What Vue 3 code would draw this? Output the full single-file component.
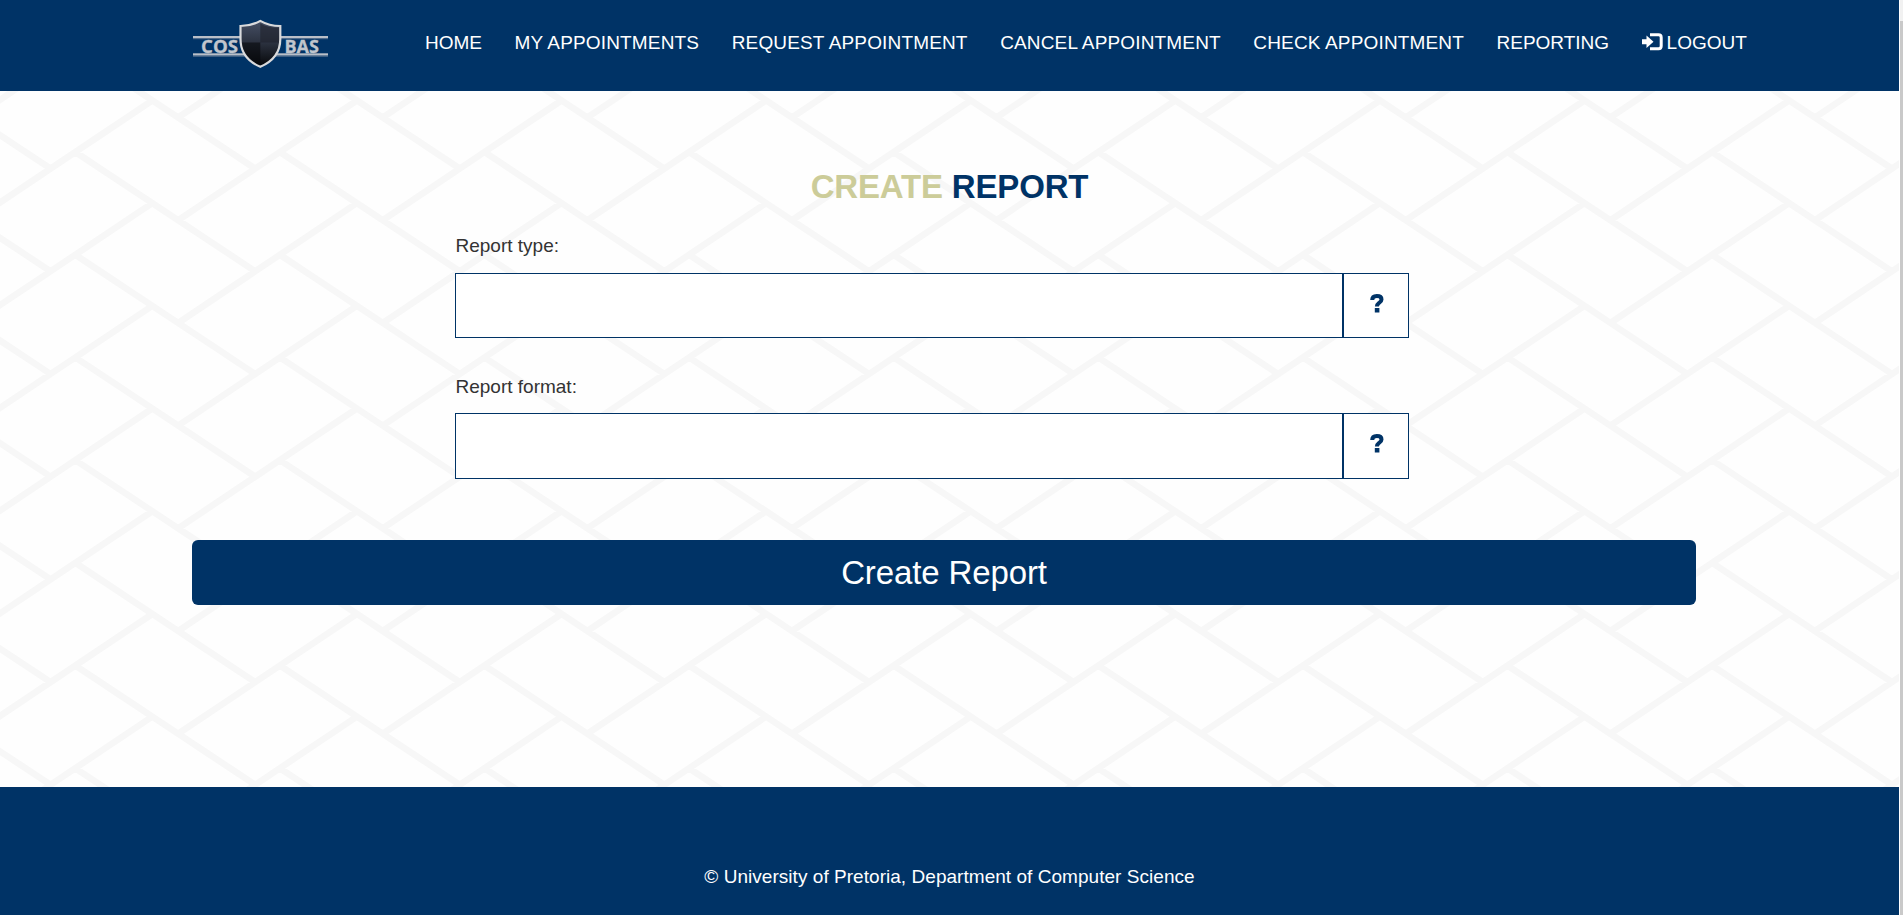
<script setup>
const links = ['HOME', 'MY APPOINTMENTS', 'REQUEST APPOINTMENT', 'CANCEL APPOINTMENT', 'CHECK APPOINTMENT', 'REPORTING']
const fields = ['Report type:', 'Report format:']

// Woven lattice: two slanted strokes repeated on a 204.6 x 102.7 grid
const stepX = 204.6
const stepY = 102.7
let lattice = ''
for (let i = -2; i < 10; i++) {
  for (let j = -3; j < 7; j++) {
    const x = i * stepX
    const y = j * stepY
    lattice += `M${x + 178.5} ${y + 129}L${x + 355} ${y + 10.7}M${x + 76} ${y + 61.5}L${x + 255} ${y + 180.2}`
  }
}
</script>

<template>
  <div class="page">
    <div class="site">
      <header class="navbar">
        <svg class="logo" width="136" height="50" viewBox="0 0 136 50">
          <defs>
            <linearGradient id="shade" x1="0" y1="0" x2="0" y2="1">
              <stop offset="0" stop-color="#465066" />
              <stop offset=".5" stop-color="#2a303d" />
              <stop offset="1" stop-color="#050608" />
            </linearGradient>
          </defs>
          <g fill="#b9bfc8">
            <rect x="0" y="17" width="135" height="2.200" />
            <rect x="0" y="34.300" width="135" height="2.200" />
          </g>
          <g fill="#7d8da3" opacity=".6">
            <rect x="0" y="19.200" width="135" height="1" />
            <rect x="0" y="36.500" width="135" height="1.300" />
          </g>
          <g class="logo-text">
            <text x="8" y="33.500" textLength="37" lengthAdjust="spacingAndGlyphs">COS</text>
            <text x="91.500" y="33.500" textLength="34.500" lengthAdjust="spacingAndGlyphs">BAS</text>
          </g>
          <path d="M67.3 1.9C61 5.5 54 7 47.500 7V20C47.500 35 56 43 67.3 47.8C78.500 43 87.300 35 87.300 20V7C80.500 7 73.500 5.500 67.300 1.900Z" fill="url(#shade)" stroke="#d9dadc" stroke-width="2.200" />
          <path d="M67.300 4.500C73 8 79.500 9 85.900 8.800V23.500H67.300Z" fill="#20242e" opacity=".65" />
          <path d="M49 23.500H67.300V46C57 40.500 50 34 49 23.500Z" fill="#07080b" opacity=".6" />
        </svg>
        <nav class="links">
          <a v-for="link in links" :key="link" :class="{ spaced: link.includes('APPOINTMENT') }">{{ link }}</a>
          <a class="logout">
            <svg width="22" height="18" viewBox="0 0 22 18">
              <path d="M0 6.300H4.500V2.500L11.500 8.700L4.500 15V11.300H0Z" fill="#fff" />
              <path d="M8 1.800H16.500Q19.200 1.800 19.200 4.500V13Q19.200 15.700 16.500 15.700H8" fill="none" stroke="#fff" stroke-width="3" />
            </svg>
            <span>LOGOUT</span>
          </a>
        </nav>
      </header>

      <main class="content">
        <svg class="lattice" width="1899" height="696"><path :d="lattice" /></svg>
        <h1><span>CREATE</span> REPORT</h1>
        <form class="form">
          <div v-for="field in fields" :key="field" class="field">
            <label>{{ field }}</label>
            <div class="group">
              <div class="input"></div>
              <div class="help">
                <svg width="14" height="19" viewBox="0 0 14 19">
                  <path d="M2.200 6C2.200 3.500 3.800 2 6.800 2C9.800 2 11.500 3.400 11.500 5.400C11.500 7.500 9.800 8.300 8.600 9.300C7.400 10.200 6.900 10.800 6.900 12.500" fill="none" stroke="#036" stroke-width="4" />
                  <rect x="4.800" y="14" width="4.600" height="4.500" fill="#036" />
                </svg>
              </div>
            </div>
          </div>
        </form>
        <div class="submit">Create Report</div>
      </main>

      <footer class="footer">© University of Pretoria, Department of Computer Science</footer>
    </div>
    <div class="scroll"><div class="thumb"></div></div>
  </div>
</template>

<style>
body { margin: 0; overflow: hidden; }
</style>

<style scoped>
.page { display: flex; width: 1903px; height: 915px; font-family: "Liberation Sans", Arial, sans-serif; background: #fff; }
.page * { box-sizing: border-box; }
.site { width: 1899px; display: flex; flex-direction: column; }
.navbar { display: flex; height: 91px; background: #036; padding-left: 193px; }
.logo { margin-top: 19px; flex: none; }
.logo-text { font: bold 17.500px "Open Sans", "Noto Sans", sans-serif; fill: #c0c5cc; stroke: #c0c5cc; stroke-width: .3; }
.links { display: flex; margin-left: 96px; padding-top: 32px; gap: 32.500px; color: #fff; font-size: 19px; line-height: 22px; white-space: nowrap; }
.spaced { letter-spacing: .158px; }
.logout { display: flex; gap: 3px; }
.logout svg { display: block; margin-top: .5px; }
.content { position: relative; height: 696px; background: #fefefe; overflow: hidden; display: flex; flex-direction: column; }
.lattice { position: absolute; left: 0; top: 0; }
.lattice path { fill: none; stroke: #f7f7f7; stroke-width: 6.500; }
h1, .form, .submit { position: relative; }
h1 { margin: 76px 0 0; text-align: center; font-size: 33px; line-height: 40px; letter-spacing: -.18px; color: #036; }
h1 span { color: #cc9; }
.form { margin: 28px 0 0 455px; width: 954px; height: 282px; }
.field { height: 141px; }
label { display: block; height: 38px; line-height: 22px; font-size: 19px; color: #333; padding-left: .5px; }
.group { display: flex; height: 65px; }
.field + .field label { height: 37px; }
.field + .field .group { height: 66px; }
.input { width: 888px; border: 1px solid #036; background: #fff; }
.help { width: 66px; border: 1px solid #036; background: #fff; display: flex; justify-content: center; padding: 20px 0 0 2px; }
.submit { margin: 23px 0 0 192px; width: 1504px; height: 65px; border-radius: 6px; background: #036; color: #fff; text-align: center; font-size: 33px; line-height: 65px; letter-spacing: -.12px; }
.footer { flex: 1; background: #036; color: #fff; text-align: center; font-size: 19px; line-height: 22px; padding-top: 79px; letter-spacing: .04px; }
.scroll { width: 4px; background: #f1f1f1; border-left: 1px solid #fff; padding-top: 21px; }
.thumb { height: 894px; background: #c9c9c9; }
</style>
